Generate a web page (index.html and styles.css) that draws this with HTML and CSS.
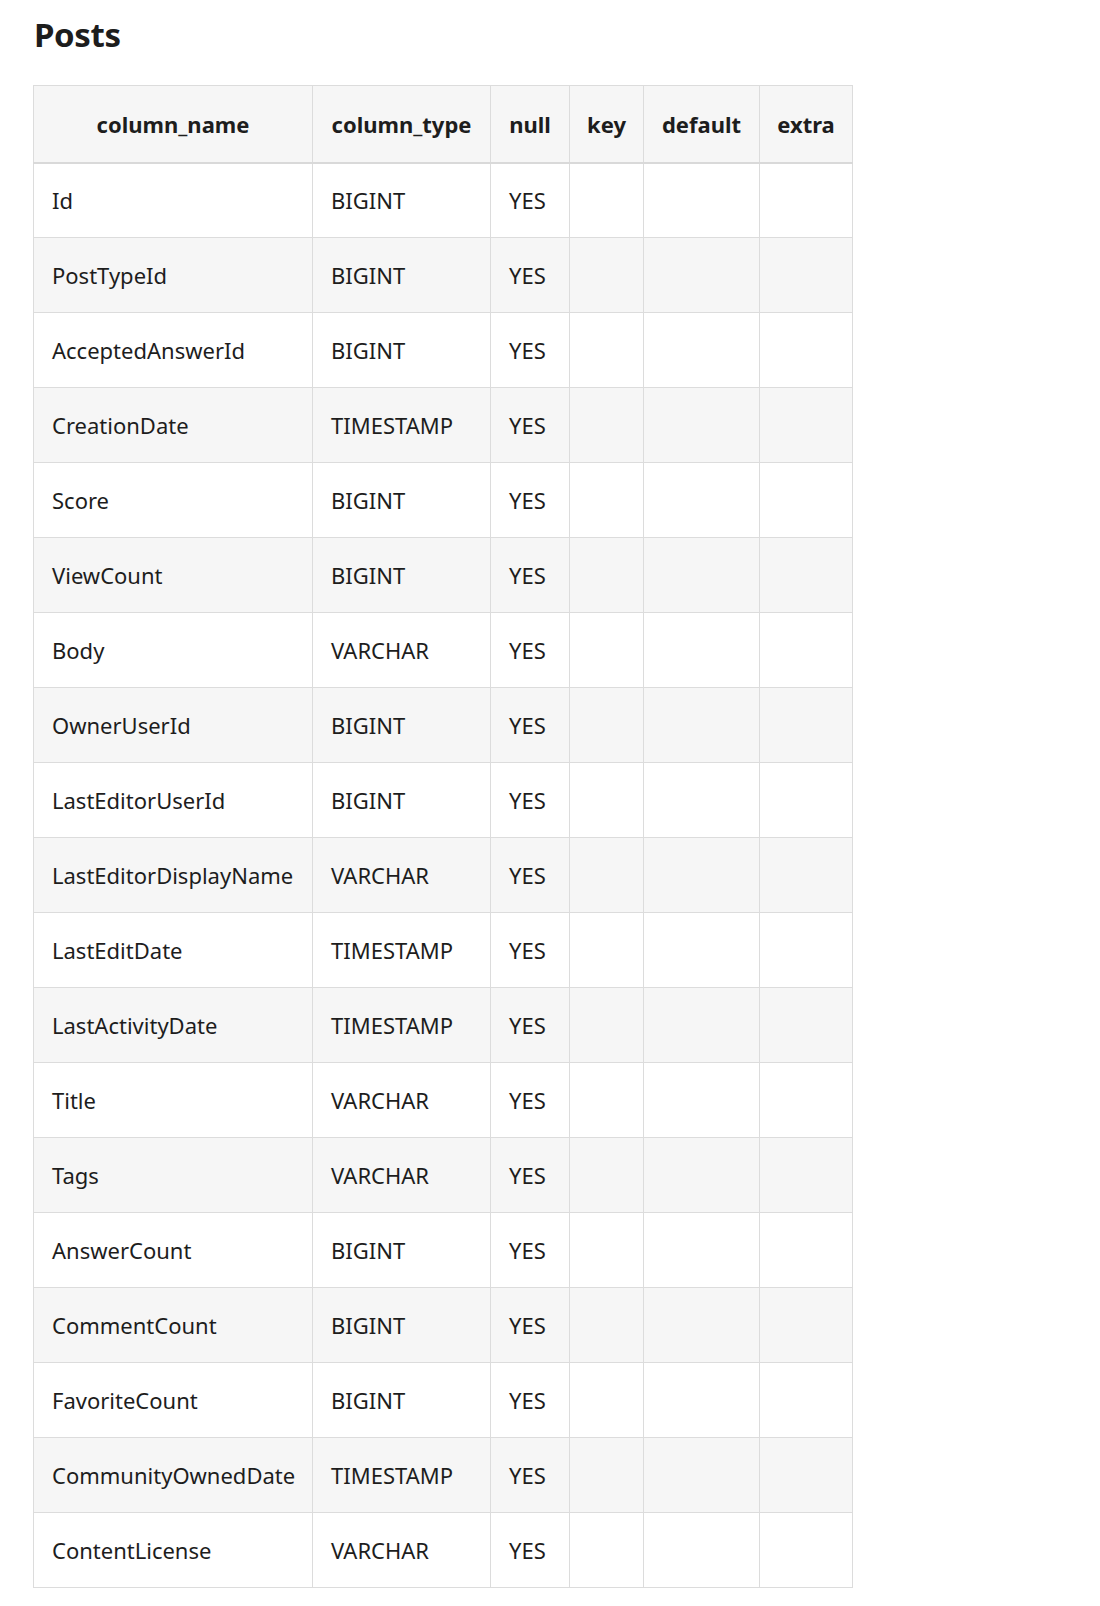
FILE: index.html
```html
<!DOCTYPE html>
<html>
<head>
<meta charset="utf-8">
<link rel="stylesheet" href="styles.css">
</head>
<body>
<h2 class="title">Posts</h2>
<table class="schema">
  <colgroup>
    <col class="c-name"><col class="c-type"><col class="c-null"><col class="c-key"><col class="c-default"><col class="c-extra">
  </colgroup>
  <thead>
    <tr><th>column_name</th><th>column_type</th><th>null</th><th>key</th><th>default</th><th>extra</th></tr>
  </thead>
  <tbody>
    <tr><td>Id</td><td>BIGINT</td><td>YES</td><td></td><td></td><td></td></tr>
    <tr><td>PostTypeId</td><td>BIGINT</td><td>YES</td><td></td><td></td><td></td></tr>
    <tr><td>AcceptedAnswerId</td><td>BIGINT</td><td>YES</td><td></td><td></td><td></td></tr>
    <tr><td>CreationDate</td><td>TIMESTAMP</td><td>YES</td><td></td><td></td><td></td></tr>
    <tr><td>Score</td><td>BIGINT</td><td>YES</td><td></td><td></td><td></td></tr>
    <tr><td>ViewCount</td><td>BIGINT</td><td>YES</td><td></td><td></td><td></td></tr>
    <tr><td>Body</td><td>VARCHAR</td><td>YES</td><td></td><td></td><td></td></tr>
    <tr><td>OwnerUserId</td><td>BIGINT</td><td>YES</td><td></td><td></td><td></td></tr>
    <tr><td>LastEditorUserId</td><td>BIGINT</td><td>YES</td><td></td><td></td><td></td></tr>
    <tr><td>LastEditorDisplayName</td><td>VARCHAR</td><td>YES</td><td></td><td></td><td></td></tr>
    <tr><td>LastEditDate</td><td>TIMESTAMP</td><td>YES</td><td></td><td></td><td></td></tr>
    <tr><td>LastActivityDate</td><td>TIMESTAMP</td><td>YES</td><td></td><td></td><td></td></tr>
    <tr><td>Title</td><td>VARCHAR</td><td>YES</td><td></td><td></td><td></td></tr>
    <tr><td>Tags</td><td>VARCHAR</td><td>YES</td><td></td><td></td><td></td></tr>
    <tr><td>AnswerCount</td><td>BIGINT</td><td>YES</td><td></td><td></td><td></td></tr>
    <tr><td>CommentCount</td><td>BIGINT</td><td>YES</td><td></td><td></td><td></td></tr>
    <tr><td>FavoriteCount</td><td>BIGINT</td><td>YES</td><td></td><td></td><td></td></tr>
    <tr><td>CommunityOwnedDate</td><td>TIMESTAMP</td><td>YES</td><td></td><td></td><td></td></tr>
    <tr><td>ContentLicense</td><td>VARCHAR</td><td>YES</td><td></td><td></td><td></td></tr>
  </tbody>
</table>
</body>
</html>
```

FILE: styles.css
```css
html, body {
  margin: 0;
  padding: 0;
  background: #ffffff;
}
body {
  font-family: "Noto Sans", "Open Sans", sans-serif;
  color: #1d1d1d;
  padding-left: 33px;
}
.title {
  margin: 0;
  padding-top: 10px;
  padding-left: 1px;
  font-size: 33px;
  line-height: 50px;
  font-weight: 700;
  letter-spacing: -0.4px;
  height: 85px;
  box-sizing: border-box;
}
.schema {
  border-collapse: collapse;
  table-layout: fixed;
  width: 820px;
  font-size: 22px;
}
.c-name { width: 279px; }
.c-type { width: 178px; }
.c-null { width: 79px; }
.c-key { width: 74px; }
.c-default { width: 116px; }
.c-extra { width: 93px; }
.schema th, .schema td {
  border: 1px solid #dcdcdc;
  padding: 0 18px;
  white-space: nowrap;
  height: 75px;
  box-sizing: border-box;
}
.schema th {
  background: #f6f6f6;
  font-weight: 700;
  text-align: center;
  height: 77px;
  border-bottom: 2px solid #d9d9d9;
  padding: 0 10px;
}
.schema td {
  text-align: left;
  font-weight: 400;
}
.schema tbody tr:nth-child(even) td {
  background: #f6f6f6;
}
```
